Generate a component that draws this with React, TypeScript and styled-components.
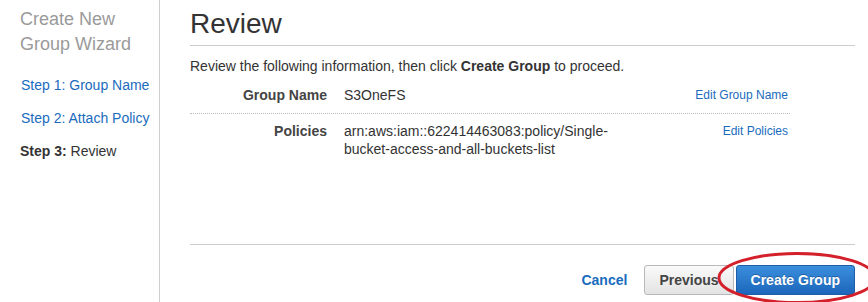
import React from "react";
import styled, { createGlobalStyle } from "styled-components";

const Global = createGlobalStyle`
  html, body { margin: 0; padding: 0; background: #fff; }
  body { font-family: "Liberation Sans", Arial, sans-serif; color: #333; }
  * { box-sizing: border-box; }
`;

const Page = styled.div`
  display: flex;
  height: 100vh;
  position: relative;
  overflow: hidden;
`;

const Sidebar = styled.nav`
  width: 160px;
  flex: none;
  border-right: 1px solid #cfcfcf;
  padding: 7px 0 0 20px;
`;

const WizardTitle = styled.div`
  font-size: 18px;
  line-height: 25px;
  color: #9a9a9a;
  margin-bottom: 18px;
`;

const StepList = styled.div`
  display: flex;
  flex-direction: column;
  gap: 13px;
  margin-left: 1px;
`;

const StepLink = styled.a<{ $current?: boolean }>`
  font-size: 14px;
  line-height: 20px;
  color: ${(p) => (p.$current ? "#333" : "#1a6bbd")};
  text-decoration: none;
  margin-left: ${(p) => (p.$current ? "-1px" : "0")};
  b { font-weight: bold; }
`;

const Main = styled.main`
  flex: 1;
  display: flex;
  flex-direction: column;
  padding: 0 13px 0 30px;
`;

const Heading = styled.h1`
  margin: 10px 0 0;
  font-size: 28px;
  line-height: 28px;
  font-weight: normal;
  color: #333;
  padding-bottom: 7px;
  border-bottom: 1px solid #cccccc;
`;

const Intro = styled.p`
  margin: 10px 0 0;
  font-size: 14px;
  line-height: 20px;
  color: #333;
`;

const Table = styled.div`
  width: 600px;
`;

const Row = styled.div<{ $divider?: boolean }>`
  display: grid;
  grid-template-columns: 137px 290px 1fr;
  column-gap: 17px;
  padding: ${(p) => (p.$divider ? "10px 0 9px" : "8px 0")};
  border-bottom: ${(p) => (p.$divider ? "1px dotted #bdbdbd" : "none")};
  font-size: 14px;
  line-height: 18px;
`;

const Label = styled.div`
  text-align: right;
  font-weight: bold;
  color: #444;
`;

const Value = styled.div`
  color: #333;
`;

const EditLink = styled.a`
  justify-self: end;
  margin-right: 2px;
  font-size: 12px;
  color: #1a6bbd;
  text-decoration: none;
`;

const Footer = styled.div`
  margin-top: auto;
  border-top: 1px solid #cccccc;
  padding: 20px 0 7px;
  display: flex;
  justify-content: flex-end;
  align-items: center;
`;

const CancelLink = styled.a`
  font-size: 14px;
  font-weight: bold;
  color: #1a6bbd;
  text-decoration: none;
  margin-right: 17px;
`;

const Button = styled.button<{ $primary?: boolean }>`
  height: 30px;
  padding: 0 14px;
  margin-left: ${(p) => (p.$primary ? "2px" : "0")};
  border-radius: 3px;
  font-family: "Liberation Sans", Arial, sans-serif;
  font-size: 14px;
  font-weight: bold;
  cursor: pointer;
  border: 1px solid ${(p) => (p.$primary ? "#1d5fa6" : "#b9b9b9")};
  color: ${(p) => (p.$primary ? "#fff" : "#444")};
  background: ${(p) =>
    p.$primary
      ? "linear-gradient(#3b8fdd, #1c66bb)"
      : "linear-gradient(#fafafa, #e3e3e3)"};
  text-shadow: ${(p) => (p.$primary ? "0 -1px 0 rgba(0,0,0,0.25)" : "none")};
`;

const Annotation = styled.svg`
  position: absolute;
  left: 710px;
  top: 245px;
  pointer-events: none;
`;

export default function App() {
  return (
    <>
      <Global />
      <Page>
        <Sidebar>
          <WizardTitle>Create New Group Wizard</WizardTitle>
          <StepList>
            <StepLink href="#">Step 1: Group Name</StepLink>
            <StepLink href="#">Step 2: Attach Policy</StepLink>
            <StepLink $current>
              <b>Step 3:</b> Review
            </StepLink>
          </StepList>
        </Sidebar>
        <Main>
          <Heading>Review</Heading>
          <Intro>
            Review the following information, then click <b>Create Group</b> to proceed.
          </Intro>
          <Table>
            <Row $divider>
              <Label>Group Name</Label>
              <Value>S3OneFS</Value>
              <EditLink href="#">Edit Group Name</EditLink>
            </Row>
            <Row>
              <Label>Policies</Label>
              <Value>arn:aws:iam::622414463083:policy/Single-bucket-access-and-all-buckets-list</Value>
              <EditLink href="#">Edit Policies</EditLink>
            </Row>
          </Table>
          <Footer>
            <CancelLink href="#">Cancel</CancelLink>
            <Button>Previous</Button>
            <Button $primary>Create Group</Button>
          </Footer>
        </Main>
        <Annotation width="170" height="70" viewBox="0 0 170 70">
          <ellipse cx="87" cy="33" rx="78" ry="24.5" fill="none" stroke="#d3202a" strokeWidth="3" />
        </Annotation>
      </Page>
    </>
  );
}
